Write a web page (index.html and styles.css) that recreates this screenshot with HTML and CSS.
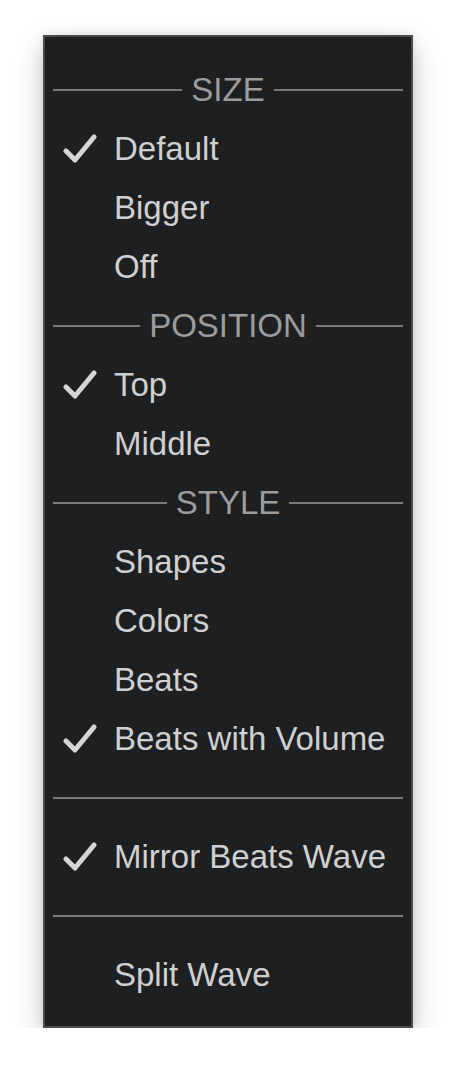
FILE: index.html
```html
<!DOCTYPE html>
<html>
<head>
<meta charset="utf-8">
<link rel="stylesheet" href="styles.css">
</head>
<body>
<div class="menu">
  <div class="header"><span class="line"></span><span class="label">SIZE</span><span class="line"></span></div>
  <div class="item"><span class="check"><svg viewBox="0 0 34 30" width="34" height="30"><path d="M3 17 L12 26 L31 3" /></svg></span><span class="text">Default</span></div>
  <div class="item"><span class="check"></span><span class="text">Bigger</span></div>
  <div class="item"><span class="check"></span><span class="text">Off</span></div>
  <div class="header"><span class="line"></span><span class="label">POSITION</span><span class="line"></span></div>
  <div class="item"><span class="check"><svg viewBox="0 0 34 30" width="34" height="30"><path d="M3 17 L12 26 L31 3" /></svg></span><span class="text">Top</span></div>
  <div class="item"><span class="check"></span><span class="text">Middle</span></div>
  <div class="header"><span class="line"></span><span class="label">STYLE</span><span class="line"></span></div>
  <div class="item"><span class="check"></span><span class="text">Shapes</span></div>
  <div class="item"><span class="check"></span><span class="text">Colors</span></div>
  <div class="item"><span class="check"></span><span class="text">Beats</span></div>
  <div class="item"><span class="check"><svg viewBox="0 0 34 30" width="34" height="30"><path d="M3 17 L12 26 L31 3" /></svg></span><span class="text">Beats with Volume</span></div>
  <div class="sep"><span class="line"></span></div>
  <div class="item"><span class="check"><svg viewBox="0 0 34 30" width="34" height="30"><path d="M3 17 L12 26 L31 3" /></svg></span><span class="text">Mirror Beats Wave</span></div>
  <div class="sep"><span class="line"></span></div>
  <div class="item"><span class="check"></span><span class="text">Split Wave</span></div>
</div>
</body>
</html>
```

FILE: styles.css
```css
html, body {
  margin: 0;
  padding: 0;
  background: #ffffff;
}
body {
  padding-top: 35px;
  padding-left: 43px;
  font-family: "Liberation Sans", Arial, sans-serif;
}
.menu {
  box-sizing: border-box;
  width: 370px;
  background: #1e1f21;
  border: 2px solid #4b4b4d;
  padding: 23px 0 22px 0;
  box-shadow: 0 12px 28px rgba(0, 0, 0, 0.22), 0 0 10px rgba(0, 0, 0, 0.08);
}
.header, .item, .sep {
  height: 59px;
  display: flex;
  align-items: center;
  font-size: 33px;
}
.header {
  padding: 0 8px;
  gap: 9px;
}
.sep {
  padding: 0 8px;
}
.line {
  flex: 1;
  height: 2px;
  background: #7a7a7a;
}
.label {
  color: #9c9c9c;
  line-height: 59px;
}
.item {
  color: #d0d0d0;
}
.check {
  width: 69px;
  flex: none;
  display: flex;
  align-items: center;
  padding-left: 18px;
  box-sizing: border-box;
}
.check svg {
  display: block;
}
.check path {
  fill: none;
  stroke: #d6d6d6;
  stroke-width: 5;
  stroke-linecap: round;
  stroke-linejoin: round;
}
.text {
  line-height: 59px;
}
```
